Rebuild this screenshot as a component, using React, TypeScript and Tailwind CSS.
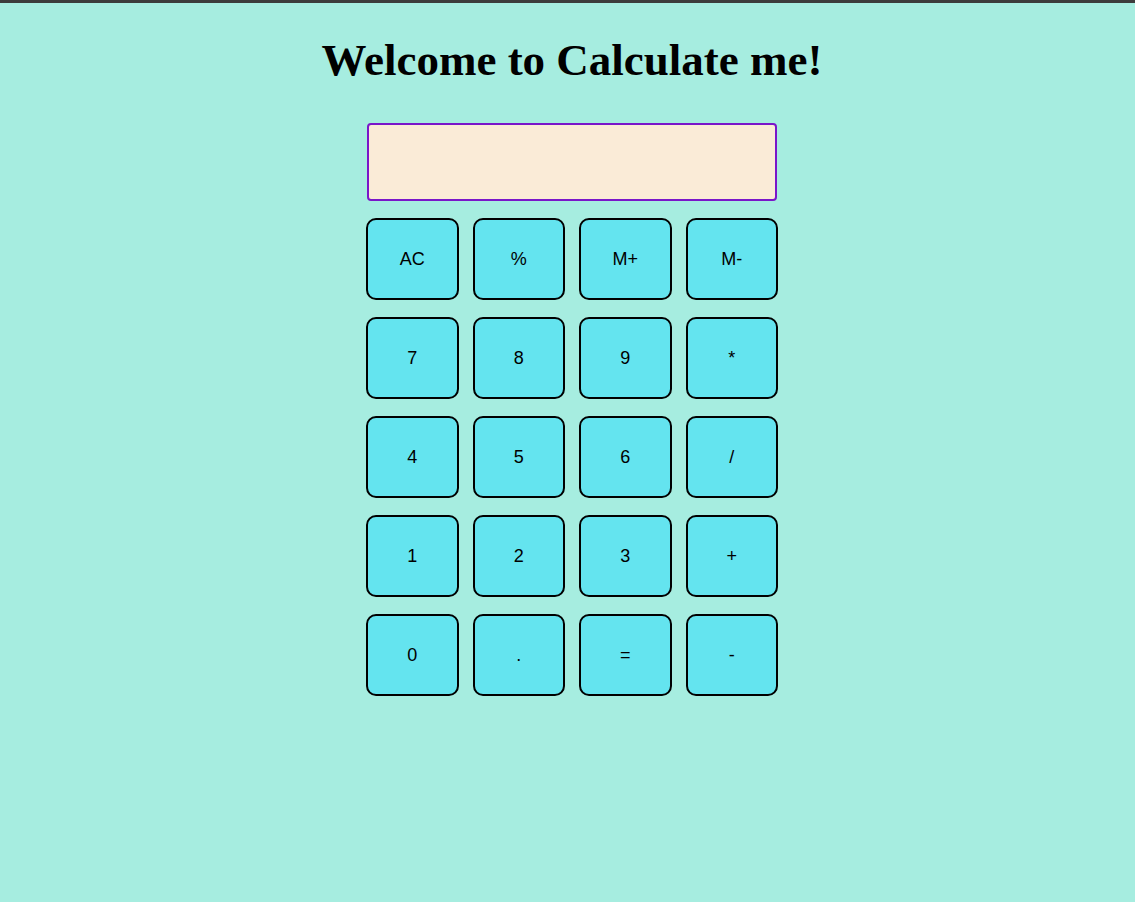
const keys = [
  "AC", "%", "M+", "M-",
  "7", "8", "9", "*",
  "4", "5", "6", "/",
  "1", "2", "3", "+",
  "0", ".", "=", "-",
];

const App = () => {
  return (
    <div className="min-h-[902px] bg-[#a6ede0] border-t-[3px] border-[#3c3c3c] pl-[9px]">
      <h1 className="pt-[27px] text-center font-['Liberation_Serif',serif] text-[45px] font-bold leading-[60px] text-black">
        Welcome to Calculate me!
      </h1>
      <div className="mx-auto mt-[33px] w-[412px]">
        <div className="mx-auto h-[78px] w-[410px] rounded-[4px] border-2 border-[#7a16c9] bg-[#faebd7]"></div>
        <div className="mt-[17px] grid grid-cols-4 gap-x-[14px] gap-y-[17px]">
          {keys.map((k) => (
            <button
              key={k}
              className="h-[82px] rounded-[10px] border-2 border-black bg-[#64e4ef] font-['Liberation_Sans',sans-serif] text-[18px] text-black"
            >
              {k}
            </button>
          ))}
        </div>
      </div>
    </div>
  );
};

export default App;
